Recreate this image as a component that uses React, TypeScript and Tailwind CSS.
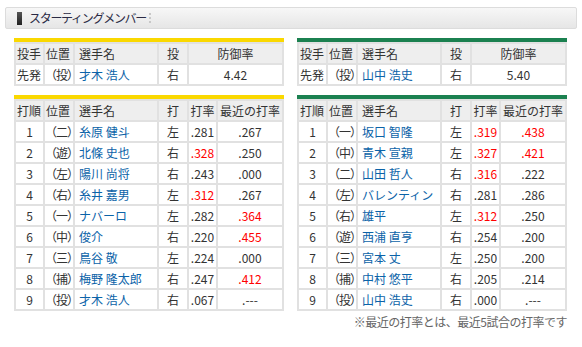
import React from "react";

type Bat = { o: string; p: string; n: string; h: string; a: string; ar?: boolean; r: string; rr?: boolean };

const left: Bat[] = [
  { o: "1", p: "（二）", n: "糸原 健斗", h: "左", a: ".281", r: ".267" },
  { o: "2", p: "（遊）", n: "北條 史也", h: "右", a: ".328", ar: true, r: ".250" },
  { o: "3", p: "（左）", n: "陽川 尚将", h: "右", a: ".243", r: ".000" },
  { o: "4", p: "（右）", n: "糸井 嘉男", h: "左", a: ".312", ar: true, r: ".267" },
  { o: "5", p: "（一）", n: "ナバーロ", h: "左", a: ".282", r: ".364", rr: true },
  { o: "6", p: "（中）", n: "俊介", h: "右", a: ".220", r: ".455", rr: true },
  { o: "7", p: "（三）", n: "鳥谷 敬", h: "左", a: ".224", r: ".000" },
  { o: "8", p: "（捕）", n: "梅野 隆太郎", h: "右", a: ".247", r: ".412", rr: true },
  { o: "9", p: "（投）", n: "才木 浩人", h: "右", a: ".067", r: ".---" },
];

const right: Bat[] = [
  { o: "1", p: "（一）", n: "坂口 智隆", h: "左", a: ".319", ar: true, r: ".438", rr: true },
  { o: "2", p: "（中）", n: "青木 宣親", h: "左", a: ".327", ar: true, r: ".421", rr: true },
  { o: "3", p: "（二）", n: "山田 哲人", h: "右", a: ".316", ar: true, r: ".222" },
  { o: "4", p: "（左）", n: "バレンティン", h: "右", a: ".281", r: ".286" },
  { o: "5", p: "（右）", n: "雄平", h: "左", a: ".312", ar: true, r: ".250" },
  { o: "6", p: "（遊）", n: "西浦 直亨", h: "右", a: ".254", r: ".200" },
  { o: "7", p: "（三）", n: "宮本 丈", h: "左", a: ".250", r: ".200" },
  { o: "8", p: "（捕）", n: "中村 悠平", h: "右", a: ".205", r: ".214" },
  { o: "9", p: "（投）", n: "山中 浩史", h: "右", a: ".000", r: ".---" },
];

const cell = "border-2 border-[#e1e1e1] h-[21px] p-0 leading-[17px]";
const th = cell + " bg-[#eeeeee] font-normal text-[#333]";

function Pitcher({ color, name, era }: { color: string; name: string; era: string }) {
  return (
    <div className="w-[270px]">
      <div className={"h-[4px] " + color} />
      <table className="w-[270px] border-collapse table-fixed text-[12px] text-[#333]">
        <colgroup>
          <col className="w-[29px]" />
          <col className="w-[30px]" />
          <col className="w-[84px]" />
          <col className="w-[30px]" />
          <col />
        </colgroup>
        <tbody>
          <tr>
            <th className={th + " text-left pl-[1px]"}>投手</th>
            <th className={th + " text-left pl-[1px]"}>位置</th>
            <th className={th + " text-left pl-[4px]"}>選手名</th>
            <th className={th + " text-center"}>投</th>
            <th className={th + " text-center"}>防御率</th>
          </tr>
          <tr>
            <td className={cell + " text-left pl-[1px]"}>先発</td>
            <td className={cell + " text-left whitespace-nowrap -tracking-[1px]"}>（投）</td>
            <td className={cell + " text-left pl-[4px] text-[#0b63a8]"}>{name}</td>
            <td className={cell + " text-center"}>右</td>
            <td className={cell + " text-center"}>{era}</td>
          </tr>
        </tbody>
      </table>
    </div>
  );
}

function Lineup({ color, rows }: { color: string; rows: Bat[] }) {
  return (
    <div className="w-[270px]">
      <div className={"h-[4px] " + color} />
      <table className="w-[270px] border-collapse table-fixed text-[12px] text-[#333]">
        <colgroup>
          <col className="w-[29px]" />
          <col className="w-[30px]" />
          <col className="w-[84px]" />
          <col className="w-[30px]" />
          <col className="w-[29px]" />
          <col />
        </colgroup>
        <tbody>
          <tr>
            <th className={th + " text-left pl-[1px]"}>打順</th>
            <th className={th + " text-left pl-[1px]"}>位置</th>
            <th className={th + " text-left pl-[4px]"}>選手名</th>
            <th className={th + " text-center"}>打</th>
            <th className={th + " text-center"}>打率</th>
            <th className={th + " text-center whitespace-nowrap"}>最近の打率</th>
          </tr>
          {rows.map((r) => (
            <tr key={r.o}>
              <td className={cell + " text-center"}>{r.o}</td>
              <td className={cell + " text-left whitespace-nowrap -tracking-[1px]"}>{r.p}</td>
              <td className={cell + " text-left pl-[4px] text-[#0b63a8] whitespace-nowrap"}>{r.n}</td>
              <td className={cell + " text-center"}>{r.h}</td>
              <td className={cell + " text-center " + (r.ar ? "text-[#ff0000]" : "")}>{r.a}</td>
              <td className={cell + " text-center " + (r.rr ? "text-[#ff0000]" : "")}>{r.r}</td>
            </tr>
          ))}
        </tbody>
      </table>
    </div>
  );
}

export default function App() {
  return (
    <div
      className="w-[582px] h-[347px] bg-white pt-[7px]"
      style={{ fontFamily: '"Noto Sans CJK JP", "Noto Sans", sans-serif' }}
    >
      <div className="mx-[5px] w-[572px] h-[22px] border border-[#dcdcdc] rounded-[2px] bg-gradient-to-b from-[#f7f7f7] to-[#e6e6e6] flex items-center pl-[11px]">
        <div className="w-[5px] h-[13px] bg-gradient-to-b from-[#555] to-[#222]" />
        <span className="ml-[7px] text-[12px] text-[#2a2a44] tracking-[-1.3px] leading-none">スターティングメンバー</span>
        <div className="ml-[3px] flex flex-col gap-[2px]">
          <div className="w-[2px] h-[2px] bg-[#c8c8c8]" />
          <div className="w-[2px] h-[2px] bg-[#c8c8c8]" />
          <div className="w-[2px] h-[2px] bg-[#c8c8c8]" />
        </div>
      </div>
      <div className="flex gap-[13px] pl-[14px] mt-[9px]">
        <Pitcher color="bg-[#fad800]" name="才木 浩人" era="4.42" />
        <Pitcher color="bg-[#1b8150]" name="山中 浩史" era="5.40" />
      </div>
      <div className="flex gap-[13px] pl-[14px] mt-[9px]">
        <Lineup color="bg-[#fad800]" rows={left} />
        <Lineup color="bg-[#1b8150]" rows={right} />
      </div>
      <div className="w-[567px] text-right text-[12px] text-[#666] mt-[3px] leading-[16px] tracking-[-0.5px]">
        ※最近の打率とは、最近5試合の打率です
      </div>
    </div>
  );
}
